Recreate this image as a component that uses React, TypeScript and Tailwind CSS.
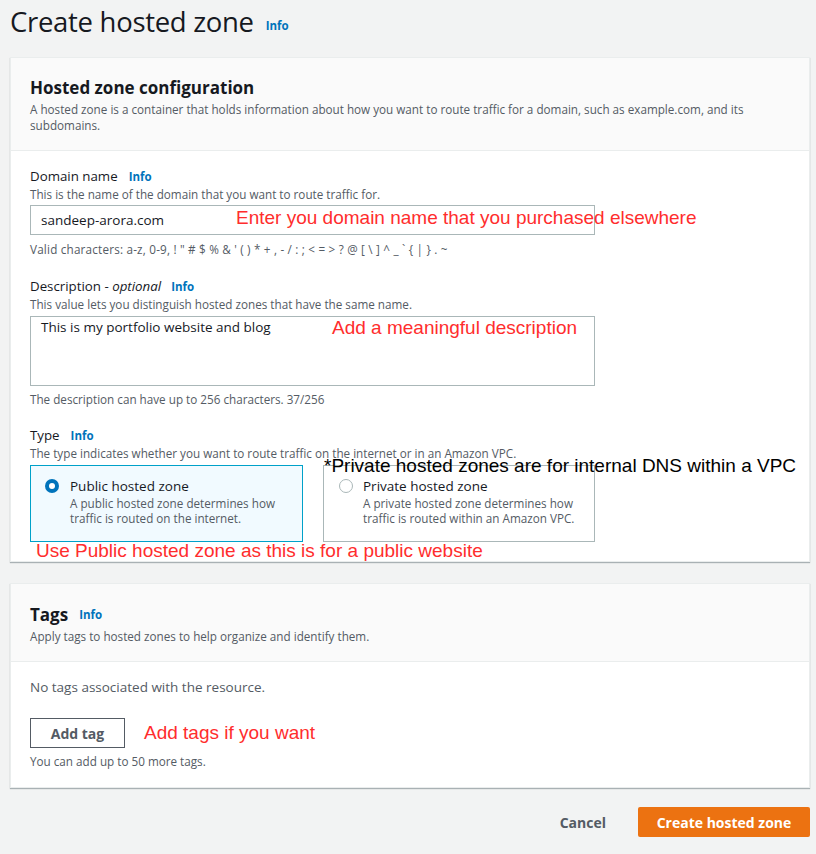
import React from 'react';

const font = { fontFamily: '"Open Sans", "Noto Sans", Arial, sans-serif' };
const note = 'absolute whitespace-nowrap text-[19px] leading-none text-[#ff2d2d] [font-family:"Liberation_Sans",Arial,sans-serif]';

function Info({ gap = 'ml-[11px]' }: { gap?: string }) {
  return <span className={`${gap} text-[11.5px] font-bold text-[#0073bb]`}>Info</span>;
}

function Radio({ checked }: { checked: boolean }) {
  return checked ? (
    <span className="mt-[3px] flex h-[14px] w-[14px] shrink-0 items-center justify-center rounded-full bg-[#0073bb]">
      <span className="h-[6px] w-[6px] rounded-full bg-white" />
    </span>
  ) : (
    <span className="mt-[3px] h-[14px] w-[14px] shrink-0 rounded-full border border-[#aab7b8] bg-white" />
  );
}

export default function App() {
  return (
    <div className="min-h-[854px] w-[816px] bg-[#f2f3f3] text-[#16191f]" style={font}>
      <div className="flex items-end px-[10px] pt-[4px]">
        <h1 className="text-[27.5px] leading-[36px] tracking-[-0.3px]">Create hosted zone</h1>
        <span className="mb-[4px]"><Info gap="ml-[12px]" /></span>
      </div>

      {/* hosted zone configuration */}
      <div className="ml-[10px] mr-[6px] mt-[17px] border border-[#eaeded] bg-white shadow-[0_1px_1px_rgba(0,28,36,0.3)]">
        <div className="border-b border-[#eaeded] bg-[#fafafa] px-[19px] pb-[17px] pt-[18px]">
          <h2 className="text-[17px] font-bold leading-[24px]">Hosted zone configuration</h2>
          <p className="mt-[1px] text-[11.7px] leading-[16px] text-[#545b64]">
            A hosted zone is a container that holds information about how you want to route traffic for a domain, such as example.com, and its subdomains.
          </p>
        </div>

        <div className="px-[19px] pb-[1px] pt-[16px]">
          <div className="relative">
            <div className="text-[13.3px] leading-[18px]">Domain name<Info /></div>
            <div className="text-[11.7px] leading-[16px] text-[#545b64]">This is the name of the domain that you want to route traffic for.</div>
            <div className="mt-[3px] flex h-[30px] w-[565px] items-center border border-[#aab7b8] px-[10px] text-[13.5px]">sandeep-arora.com</div>
            <div className="mt-[6px] text-[11.7px] leading-[16px] tracking-[0.2px] text-[#545b64]">
              Valid characters: a-z, 0-9, ! " # $ % &amp; ' ( ) * + , - / : ; &lt; = &gt; ? @ [ \ ] ^ _ ` {'{'} | {'}'} . ~
            </div>
            <span className={`${note} left-[206px] top-[41px]`}>Enter you domain name that you purchased elsewhere</span>
          </div>

          <div className="relative mt-[20px]">
            <div className="text-[13.3px] leading-[18px]">Description - <i>optional</i><Info gap="ml-[10px]" /></div>
            <div className="text-[11.7px] leading-[16px] text-[#545b64]">This value lets you distinguish hosted zones that have the same name.</div>
            <div className="mt-[4px] h-[70px] w-[565px] border border-[#aab7b8] px-[10px] py-0 text-[13.5px] leading-[20px]">This is my portfolio website and blog</div>
            <div className="mt-[5px] text-[11.7px] leading-[16px] text-[#545b64]">The description can have up to 256 characters. 37/256</div>
            <span className={`${note} left-[302px] top-[41px]`}>Add a meaningful description</span>
          </div>

          <div className="relative mt-[19px]">
            <div className="text-[13.3px] leading-[18px]">Type<Info /></div>
            <div className="text-[11.7px] leading-[16px] text-[#545b64]">The type indicates whether you want to route traffic on the internet or in an Amazon VPC.</div>
            <div className="mt-[4px] flex gap-[20px]">
              <div className="flex h-[77px] w-[273px] gap-[11px] border border-[#00a1c9] bg-[#f1faff] px-[14px] pt-[10px]">
                <Radio checked />
                <div>
                  <div className="text-[13.5px] leading-[20px]">Public hosted zone</div>
                  <div className="text-[11.7px] leading-[15px] text-[#545b64]">A public hosted zone determines how traffic is routed on the internet.</div>
                </div>
              </div>
              <div className="flex h-[77px] w-[272px] gap-[10px] border border-[#aab7b8] px-[15px] pt-[10px]">
                <Radio checked={false} />
                <div>
                  <div className="text-[13.5px] leading-[20px]">Private hosted zone</div>
                  <div className="text-[11.7px] leading-[15px] text-[#545b64]">A private hosted zone determines how traffic is routed within an Amazon VPC.</div>
                </div>
              </div>
            </div>
            <span className={`${note} left-[294px] top-[30px] !text-black`}>*Private hosted zones are for internal DNS within a VPC</span>
            <div className={`${note} relative ml-[6px] mt-[-1px]`}>Use Public hosted zone as this is for a public website</div>
          </div>
        </div>
      </div>

      {/* tags */}
      <div className="ml-[10px] mr-[6px] mt-[21px] border border-[#eaeded] bg-white shadow-[0_1px_1px_rgba(0,28,36,0.3)]">
        <div className="border-b border-[#eaeded] bg-[#fafafa] px-[19px] pb-[17px] pt-[19px]">
          <h2 className="flex items-center text-[17px] font-bold leading-[24px]">Tags<Info /></h2>
          <p className="mt-[1px] text-[11.7px] leading-[16px] text-[#545b64]">Apply tags to hosted zones to help organize and identify them.</p>
        </div>
        <div className="px-[19px] pb-[18px] pt-[15px]">
          <div className="text-[13.5px] leading-[20px] text-[#545b64]">No tags associated with the resource.</div>
          <div className="mt-[21px] flex items-center">
            <button className="h-[30px] w-[95px] border border-[#545b64] text-[14px] font-bold text-[#545b64]">Add tag</button>
            <span className="ml-[19px] text-[19px] text-[#ff2d2d] [font-family:'Liberation_Sans',Arial,sans-serif]">Add tags if you want</span>
          </div>
          <div className="mt-[5px] text-[11.7px] leading-[16px] text-[#545b64]">You can add up to 50 more tags.</div>
        </div>
      </div>

      <div className="mt-[19px] flex items-center justify-end gap-[32px] pr-[6px]">
        <button className="text-[14px] font-bold text-[#545b64]">Cancel</button>
        <button className="h-[30px] w-[172px] rounded-[2px] bg-[#ec7211] text-[14px] font-bold text-white">Create hosted zone</button>
      </div>
    </div>
  );
}
